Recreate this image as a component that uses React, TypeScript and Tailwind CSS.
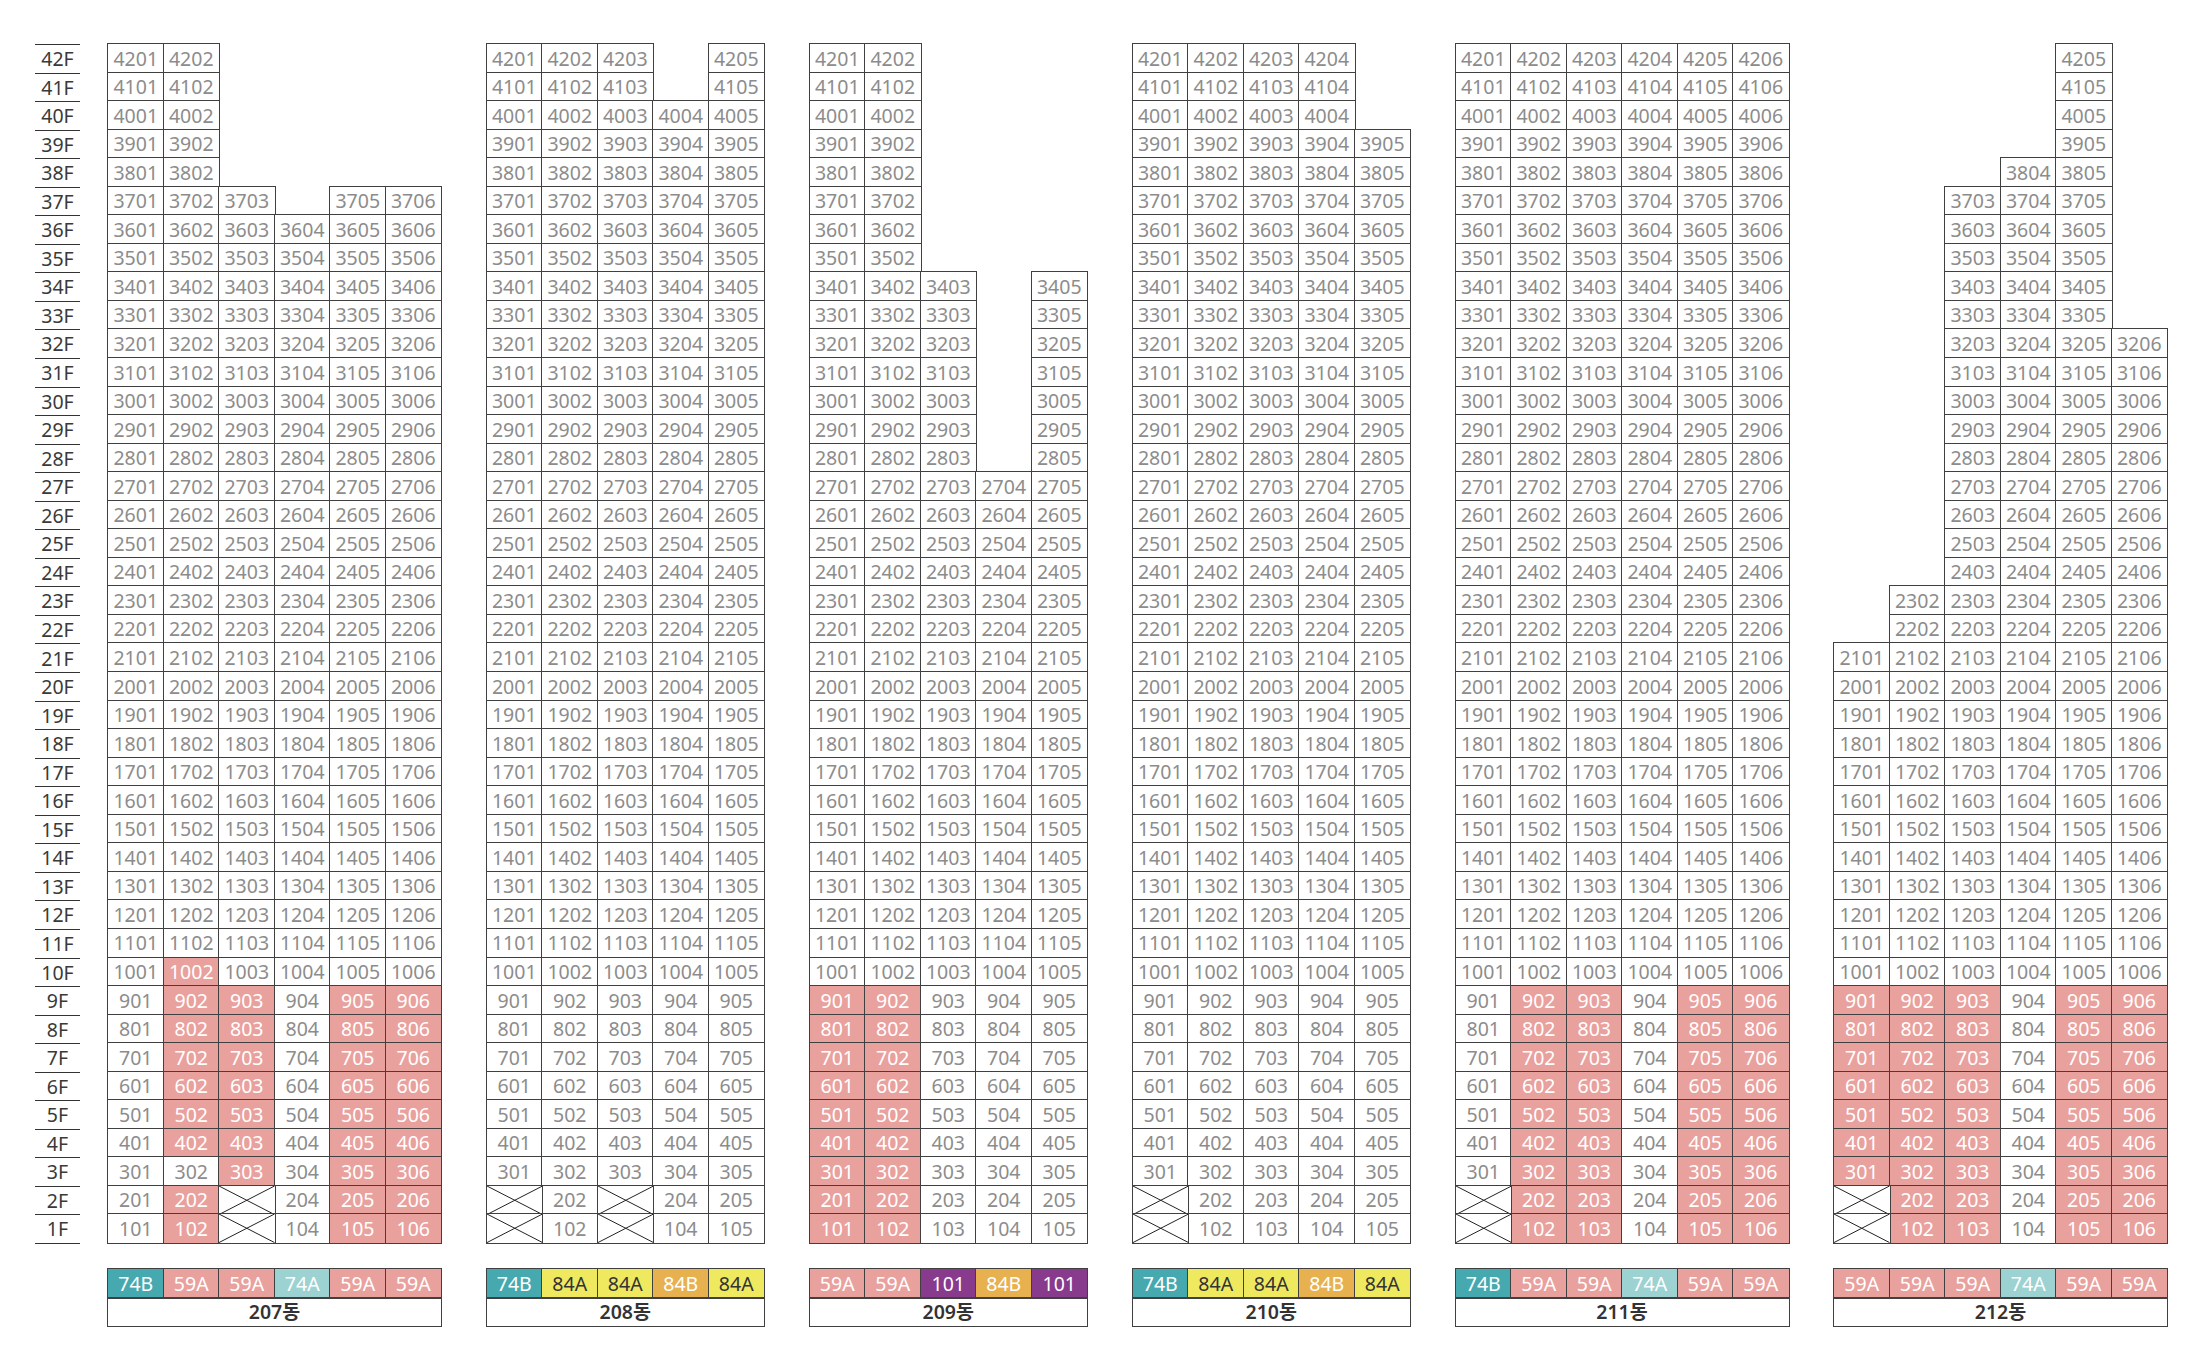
const FLOORS = Array.from({ length: 42 }, (_, i) => 42 - i);

type Bldg = {
  name: string;
  cols: number;
  has: (f: number, c: number) => boolean;
  pink: (f: number, c: number) => boolean;
  x: (f: number, c: number) => boolean;
  types: string[];
};

const buildings: Bldg[] = [
  {
    name: "207동",
    cols: 6,
    has: (f, c) => (f >= 38 ? c <= 2 : f === 37 ? c !== 4 : true),
    pink: (f, c) => {
      if (f === 10) return c === 2;
      if (f >= 4 && f <= 9) return [2, 3, 5, 6].includes(c);
      if (f === 3) return [3, 5, 6].includes(c);
      if (f <= 2) return [2, 5, 6].includes(c);
      return false;
    },
    x: (f, c) => f <= 2 && c === 3,
    types: ["74B", "59A", "59A", "74A", "59A", "59A"],
  },
  {
    name: "208동",
    cols: 5,
    has: (f, c) => (f >= 41 ? c !== 4 : true),
    pink: () => false,
    x: (f, c) => f <= 2 && (c === 1 || c === 3),
    types: ["74B", "84A", "84A", "84B", "84A"],
  },
  {
    name: "209동",
    cols: 5,
    has: (f, c) => (f >= 35 ? c <= 2 : f >= 28 ? c !== 4 : true),
    pink: (f, c) => f <= 9 && c <= 2,
    x: () => false,
    types: ["59A", "59A", "101", "84B", "101"],
  },
  {
    name: "210동",
    cols: 5,
    has: (f, c) => (f >= 40 ? c <= 4 : true),
    pink: () => false,
    x: (f, c) => f <= 2 && c === 1,
    types: ["74B", "84A", "84A", "84B", "84A"],
  },
  {
    name: "211동",
    cols: 6,
    has: () => true,
    pink: (f, c) => f <= 9 && [2, 3, 5, 6].includes(c),
    x: (f, c) => f <= 2 && c === 1,
    types: ["74B", "59A", "59A", "74A", "59A", "59A"],
  },
  {
    name: "212동",
    cols: 6,
    has: (f, c) => {
      if (f >= 39) return c === 5;
      if (f === 38) return c === 4 || c === 5;
      if (f >= 33) return c >= 3 && c <= 5;
      if (f >= 24) return c >= 3;
      if (f >= 22) return c >= 2;
      return true;
    },
    pink: (f, c) => {
      if (f >= 3 && f <= 9) return c !== 4;
      if (f <= 2) return [2, 3, 5, 6].includes(c);
      return false;
    },
    x: (f, c) => f <= 2 && c === 1,
    types: ["59A", "59A", "59A", "74A", "59A", "59A"],
  },
];

const typeStyle: Record<string, string> = {
  "74B": "bg-[#46a9b0] text-white",
  "74A": "bg-[#9dd2d2] text-white",
  "59A": "bg-[#e9a19e] text-white",
  "84A": "bg-[#efe960] text-[#333]",
  "84B": "bg-[#e7b14f] text-white",
  "101": "bg-[#883a8d] text-white",
};

const gridCols: Record<number, string> = {
  5: "grid grid-cols-[repeat(5,55.5px)]",
  6: "grid grid-cols-[repeat(6,55.5px)]",
};

const line = "outline outline-[#404040] outline-offset-[-0.5px]";

const Cell = ({ label, pink, cross }: { label: string; pink: boolean; cross: boolean }) => {
  if (cross)
    return (
      <div className={`relative h-[28.55px] bg-white ${line}`}>
        <svg className="absolute inset-0 h-full w-full" viewBox="0 0 100 100" preserveAspectRatio="none">
          <path d="M0 0L100 100M100 0L0 100" stroke="#222" strokeWidth="1" vectorEffect="non-scaling-stroke" />
        </svg>
      </div>
    );
  return (
    <div
      className={`flex h-[28.55px] items-center justify-center text-[19.5px] leading-none ${line} ${
        pink ? "bg-[#e9a19e] text-white" : "bg-white text-[#8c8c8c]"
      }`}
    >
      {label}
    </div>
  );
};

const Building = ({ b }: { b: Bldg }) => (
  <div className="flex flex-col">
    <div className={gridCols[b.cols]}>
      {FLOORS.map((f) =>
        Array.from({ length: b.cols }, (_, i) => i + 1).map((c) =>
          b.has(f, c) ? (
            <Cell
              key={`${f}-${c}`}
              label={`${f}${String(c).padStart(2, "0")}`}
              pink={b.pink(f, c)}
              cross={b.x(f, c)}
            />
          ) : (
            <div key={`${f}-${c}`} className="h-[28.55px]" />
          )
        )
      )}
    </div>

    {/* 평형 범례 */}
    <div className="mt-[26px]">
      <div className={gridCols[b.cols]}>
        {b.types.map((t, i) => (
          <div
            key={i}
            className={`flex h-[29px] items-center justify-center text-[19.5px] leading-none ${line} ${typeStyle[t]}`}
          >
            {t}
          </div>
        ))}
      </div>
      <div
        className={`flex h-[28px] items-center justify-center bg-white text-[19.5px] font-semibold leading-none text-[#333] ${line}`}
      >
        {b.name}
      </div>
    </div>
  </div>
);

export default function App() {
  return (
    <div
      className="flex min-h-screen bg-white pl-[35px] pt-[44px]"
      style={{ fontFamily: '"Noto Sans", "Noto Sans CJK KR", sans-serif' }}
    >
      {/* 층 표시 */}
      <div className="w-[45px] border-t-[1.5px] border-[#333]">
        {FLOORS.map((f) => (
          <div
            key={f}
            className="flex h-[28.55px] items-center justify-center border-b-[1.5px] border-[#333] text-[19.5px] leading-none text-[#3a3a3a]"
          >
            {f}F
          </div>
        ))}
      </div>

      <div className="ml-[28px] flex gap-[45.5px]">
        {buildings.map((b) => (
          <Building key={b.name} b={b} />
        ))}
      </div>
    </div>
  );
}
